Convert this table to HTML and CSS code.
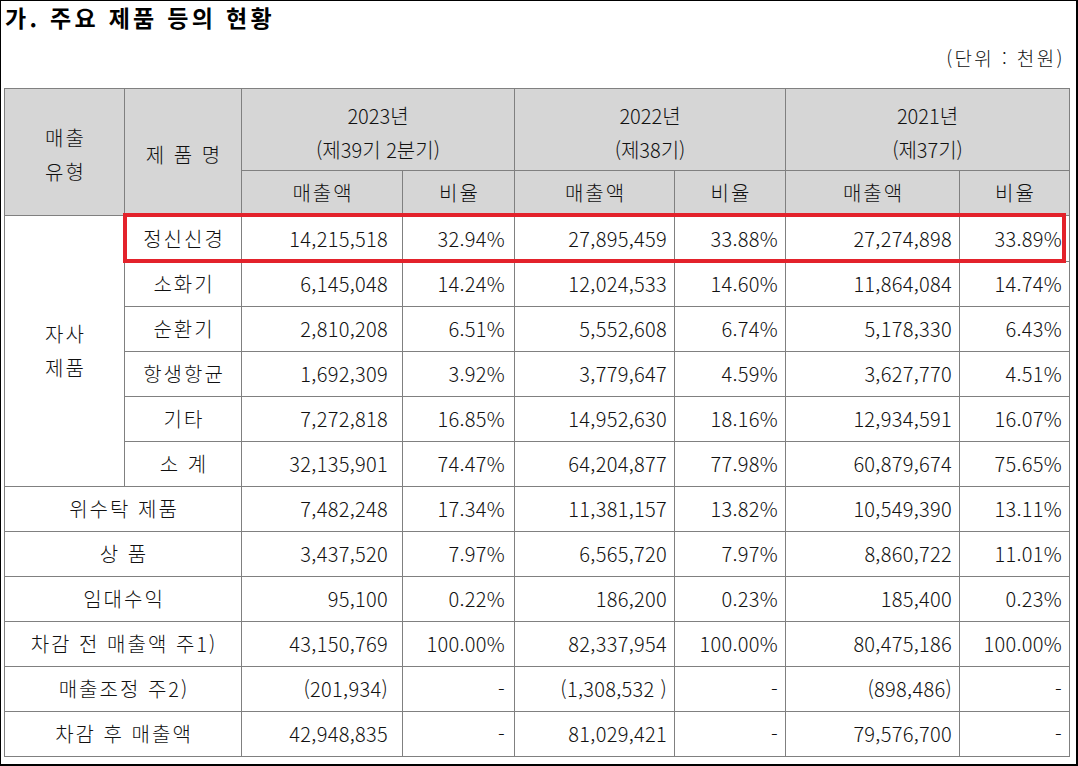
FILE: index.html
```html
<!DOCTYPE html>
<html lang="ko">
<head>
<meta charset="utf-8">
<title>주요 제품 등의 현황</title>
<link rel="stylesheet" href="styles.css">
</head>
<body>
<div class="page">
  <h1 class="title">가. 주요 제품 등의 현황</h1>
  <div class="unit">(단위 : 천원)</div>
  <div class="table-wrap">
    <table class="sales">
      <colgroup>
        <col class="c1"><col class="c2"><col class="c3"><col class="c4">
        <col class="c5"><col class="c6"><col class="c7"><col class="c8">
      </colgroup>
      <thead>
        <tr class="hr1">
          <th rowspan="2" class="lbl">매출<br>유형</th>
          <th rowspan="2" class="lbl">제 품 명</th>
          <th colspan="2">2023년<br>(제39기 2분기)</th>
          <th colspan="2">2022년<br>(제38기)</th>
          <th colspan="2">2021년<br>(제37기)</th>
        </tr>
        <tr class="hr2">
          <th class="lbl">매출액</th><th class="lbl">비율</th>
          <th class="lbl">매출액</th><th class="lbl">비율</th>
          <th class="lbl">매출액</th><th class="lbl">비율</th>
        </tr>
      </thead>
      <tbody>
        <tr class="first">
          <td rowspan="6" class="lbl">자사<br>제품</td>
          <td class="lbl">정신신경</td>
          <td class="n a">14,215,518</td><td class="n b">32.94%</td>
          <td class="n">27,895,459</td><td class="n">33.88%</td>
          <td class="n">27,274,898</td><td class="n">33.89%</td>
        </tr>
        <tr>
          <td class="lbl">소화기</td>
          <td class="n a">6,145,048</td><td class="n b">14.24%</td>
          <td class="n">12,024,533</td><td class="n">14.60%</td>
          <td class="n">11,864,084</td><td class="n">14.74%</td>
        </tr>
        <tr>
          <td class="lbl">순환기</td>
          <td class="n a">2,810,208</td><td class="n b">6.51%</td>
          <td class="n">5,552,608</td><td class="n">6.74%</td>
          <td class="n">5,178,330</td><td class="n">6.43%</td>
        </tr>
        <tr>
          <td class="lbl">항생항균</td>
          <td class="n a">1,692,309</td><td class="n b">3.92%</td>
          <td class="n">3,779,647</td><td class="n">4.59%</td>
          <td class="n">3,627,770</td><td class="n">4.51%</td>
        </tr>
        <tr>
          <td class="lbl">기타</td>
          <td class="n a">7,272,818</td><td class="n b">16.85%</td>
          <td class="n">14,952,630</td><td class="n">18.16%</td>
          <td class="n">12,934,591</td><td class="n">16.07%</td>
        </tr>
        <tr>
          <td class="lbl">소 계</td>
          <td class="n a">32,135,901</td><td class="n b">74.47%</td>
          <td class="n">64,204,877</td><td class="n">77.98%</td>
          <td class="n">60,879,674</td><td class="n">75.65%</td>
        </tr>
        <tr>
          <td colspan="2" class="lbl">위수탁 제품</td>
          <td class="n a">7,482,248</td><td class="n b">17.34%</td>
          <td class="n">11,381,157</td><td class="n">13.82%</td>
          <td class="n">10,549,390</td><td class="n">13.11%</td>
        </tr>
        <tr>
          <td colspan="2" class="lbl">상 품</td>
          <td class="n a">3,437,520</td><td class="n b">7.97%</td>
          <td class="n">6,565,720</td><td class="n">7.97%</td>
          <td class="n">8,860,722</td><td class="n">11.01%</td>
        </tr>
        <tr>
          <td colspan="2" class="lbl">임대수익</td>
          <td class="n a">95,100</td><td class="n b">0.22%</td>
          <td class="n">186,200</td><td class="n">0.23%</td>
          <td class="n">185,400</td><td class="n">0.23%</td>
        </tr>
        <tr>
          <td colspan="2" class="lbl">차감 전 매출액 주1)</td>
          <td class="n a">43,150,769</td><td class="n b">100.00%</td>
          <td class="n">82,337,954</td><td class="n">100.00%</td>
          <td class="n">80,475,186</td><td class="n">100.00%</td>
        </tr>
        <tr>
          <td colspan="2" class="lbl">매출조정 주2)</td>
          <td class="n a">(201,934)</td><td class="n b">-</td>
          <td class="n">(1,308,532 )</td><td class="n">-</td>
          <td class="n">(898,486)</td><td class="n">-</td>
        </tr>
        <tr>
          <td colspan="2" class="lbl">차감 후 매출액</td>
          <td class="n a">42,948,835</td><td class="n b">-</td>
          <td class="n">81,029,421</td><td class="n">-</td>
          <td class="n">79,576,700</td><td class="n">-</td>
        </tr>
      </tbody>
    </table>
    <div class="highlight"></div>
  </div>
</div>
</body>
</html>
```

FILE: styles.css
```css
html, body {
  margin: 0;
  padding: 0;
  background: #fff;
}

body {
  font-family: "Noto Sans CJK KR", "Noto Sans", sans-serif;
  color: #111;
}

.page {
  position: relative;
  width: 1078px;
  height: 766px;
  box-sizing: border-box;
  border-top: 1px solid #000;
  border-left: 1px solid #000;
  border-right: 2px solid #000;
  border-bottom: 2px solid #000;
  padding: 0 6px 0 3px;
}

.title {
  margin: 0;
  padding: 1px 0 0 1px;
  font-size: 23px;
  line-height: 31px;
  font-weight: 700;
  letter-spacing: 3.3px;
  color: #000;
}

.unit {
  margin: 12px 5px 0 0;
  text-align: right;
  font-size: 19px;
  line-height: 26px;
  font-weight: 300;
  letter-spacing: 2.4px;
}

.table-wrap {
  position: relative;
  margin-top: 17px;
  width: 1066px;
}

.sales {
  width: 1066px;
  table-layout: fixed;
  border-collapse: collapse;
  border: 1px solid #000;
  font-size: 20px;
  font-weight: 300;
}

.c1 { width: 120px; }
.c2 { width: 117px; }
.c3 { width: 161px; }
.c4 { width: 112px; }
.c5 { width: 160px; }
.c6 { width: 111px; }
.c7 { width: 174px; }
.c8 { width: 110px; }

.sales th,
.sales td {
  border: 1px solid #808080;
  padding: 0 7px;
  height: 44px;
  line-height: 34px;
  font-weight: 300;
  white-space: nowrap;
}

.sales th {
  background: #d6d6d6;
  text-align: center;
}

.hr1 th {
  height: 75px;
  padding-top: 6px;
}

.first td {
  height: 45px;
}

.sales .lbl {
  text-align: center;
  letter-spacing: 2px;
  padding-left: 9px;
}

.sales .n {
  text-align: right;
  letter-spacing: 0.3px;
}

.sales .n.a {
  padding-right: 14px;
}

.sales .n.b {
  padding-right: 9px;
}

.highlight {
  position: absolute;
  left: 119px;
  top: 125px;
  width: 943px;
  height: 50px;
  box-sizing: border-box;
  border: 4px solid #e3222b;
  pointer-events: none;
}
```
